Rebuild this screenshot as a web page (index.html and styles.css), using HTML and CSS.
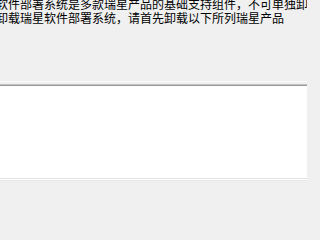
FILE: index.html
```html
<!DOCTYPE html>
<html lang="zh-CN">
<head>
<meta charset="utf-8">
<link rel="stylesheet" href="styles.css">
</head>
<body>
<div class="page">
  <div class="desc">
    <div class="line">软件部署系统是多款瑞星产品的基础支持组件，不可单独卸</div>
    <div class="line">卸载瑞星软件部署系统，请首先卸载以下所列瑞星产品</div>
  </div>
  <div class="sep"></div>
  <div class="list-outer">
    <div class="list-inner"></div>
  </div>
  <div class="footer"></div>
</div>
</body>
</html>
```
FILE: styles.css
```css
html, body {
  margin: 0;
  padding: 0;
  background: #f0f0f0;
}
.page {
  width: 307px;
  height: 201px;
  overflow: hidden;
  display: flex;
  flex-direction: column;
}
.desc {
  margin: -3px 0 0 -4px;
  font-family: "Noto Sans CJK SC", "Microsoft YaHei", sans-serif;
  font-size: 12px;
  line-height: 14px;
  color: #000;
  white-space: nowrap;
  height: 28px;
  flex: none;
}
.sep {
  margin-top: 56px;
  height: 0;
  border-bottom: 1px solid #fcfcfc;
  flex: none;
}
.list-outer {
  margin-top: 2px;
  border-top: 1px solid #c4c4c4;
  border-bottom: 1px solid #ffffff;
  flex: none;
}
.list-inner {
  height: 92px;
  background: #ffffff;
  border-top: 1px solid #999999;
  border-bottom: 1px solid #e3e3e3;
}
.footer {
  flex: 1;
  border-top: 1px solid #e8e8e8;
}
```
